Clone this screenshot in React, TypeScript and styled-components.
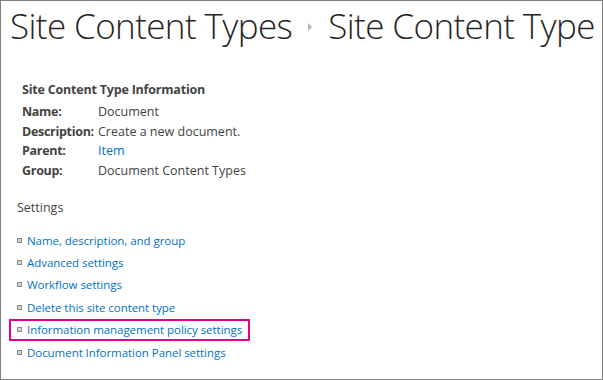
import React from 'react';
import styled, { createGlobalStyle } from 'styled-components';

const GlobalStyle = createGlobalStyle`
  html, body {
    margin: 0;
    padding: 0;
    background: #ffffff;
  }
  body {
    font-family: 'Open Sans', 'Noto Sans', sans-serif;
  }
`;

const Frame = styled.div`
  width: 603px;
  height: 380px;
  box-sizing: border-box;
  border: 1px solid #7f7f7f;
  overflow: hidden;
  background: #fff;
`;

const TitleRow = styled.div`
  display: flex;
  align-items: center;
  gap: 16px;
  padding: 0 0 0 9px;
  height: 48px;
  white-space: nowrap;
  color: #262626;
  font-family: 'Open Sans', sans-serif;
  font-weight: 300;
  font-size: 35px;
  letter-spacing: -0.6px;
`;

const Crumb = styled.span``;

const CrumbArrow = styled.span`
  width: 0;
  height: 0;
  margin-top: 4px;
  border-top: 4px solid transparent;
  border-bottom: 4px solid transparent;
  border-left: 4px solid #b1b1b1;
`;

const Body = styled.div`
  padding: 32px 0 0 21px;
  font-family: 'Open Sans', sans-serif;
  font-size: 12.5px;
  color: #444;
`;

const SectionTitle = styled.div`
  font-weight: 700;
  color: #444;
  margin-bottom: 4px;
  letter-spacing: -0.2px;
`;

const InfoGrid = styled.div`
  display: grid;
  grid-template-columns: 76px auto;
  line-height: 19.5px;
`;

const Label = styled.div`
  font-weight: 700;
  color: #444;
  letter-spacing: -0.3px;
`;

const Value = styled.div<{ $link?: boolean }>`
  color: ${p => (p.$link ? '#0072c6' : '#444')};
`;

const SettingsTitle = styled.div`
  margin: 19px 0 0 -5px;
  color: #444;
`;

const LinkList = styled.ul`
  list-style: none;
  margin: 13px 0 0 -13px;
  padding: 0;
`;

const LinkItem = styled.li<{ $highlight?: boolean }>`
  display: flex;
  align-items: center;
  gap: 5px;
  width: 241px;
  height: 22.4px;
  box-sizing: border-box;
  padding-left: 8px;
  white-space: nowrap;
  outline: ${p => (p.$highlight ? '2px solid #e3008c' : 'none')};
  outline-offset: -2px;
`;

const Bullet = styled.span`
  width: 3px;
  height: 3px;
  border: 1px solid #8a8a8a;
  background: #d4d4d4;
  flex: none;
`;

const Link = styled.a`
  color: #0072c6;
  font-size: 11.5px;
  text-decoration: none;
  letter-spacing: -0.05px;
`;

const info = [
  { label: 'Name:', value: 'Document' },
  { label: 'Description:', value: 'Create a new document.' },
  { label: 'Parent:', value: 'Item', link: true },
  { label: 'Group:', value: 'Document Content Types' },
];

const links = [
  'Name, description, and group',
  'Advanced settings',
  'Workflow settings',
  'Delete this site content type',
  'Information management policy settings',
  'Document Information Panel settings',
];

export default function App() {
  return (
    <Frame>
      <GlobalStyle />
      <TitleRow>
        <Crumb>Site Content Types</Crumb>
        <CrumbArrow />
        <Crumb>Site Content Type</Crumb>
      </TitleRow>
      <Body>
        <SectionTitle>Site Content Type Information</SectionTitle>
        <InfoGrid>
          {info.map(row => (
            <React.Fragment key={row.label}>
              <Label>{row.label}</Label>
              <Value $link={row.link}>{row.value}</Value>
            </React.Fragment>
          ))}
        </InfoGrid>
        <SettingsTitle>Settings</SettingsTitle>
        <LinkList>
          {links.map((text, i) => (
            <LinkItem key={text} $highlight={i === 4}>
              <Bullet />
              <Link href="#">{text}</Link>
            </LinkItem>
          ))}
        </LinkList>
      </Body>
    </Frame>
  );
}
